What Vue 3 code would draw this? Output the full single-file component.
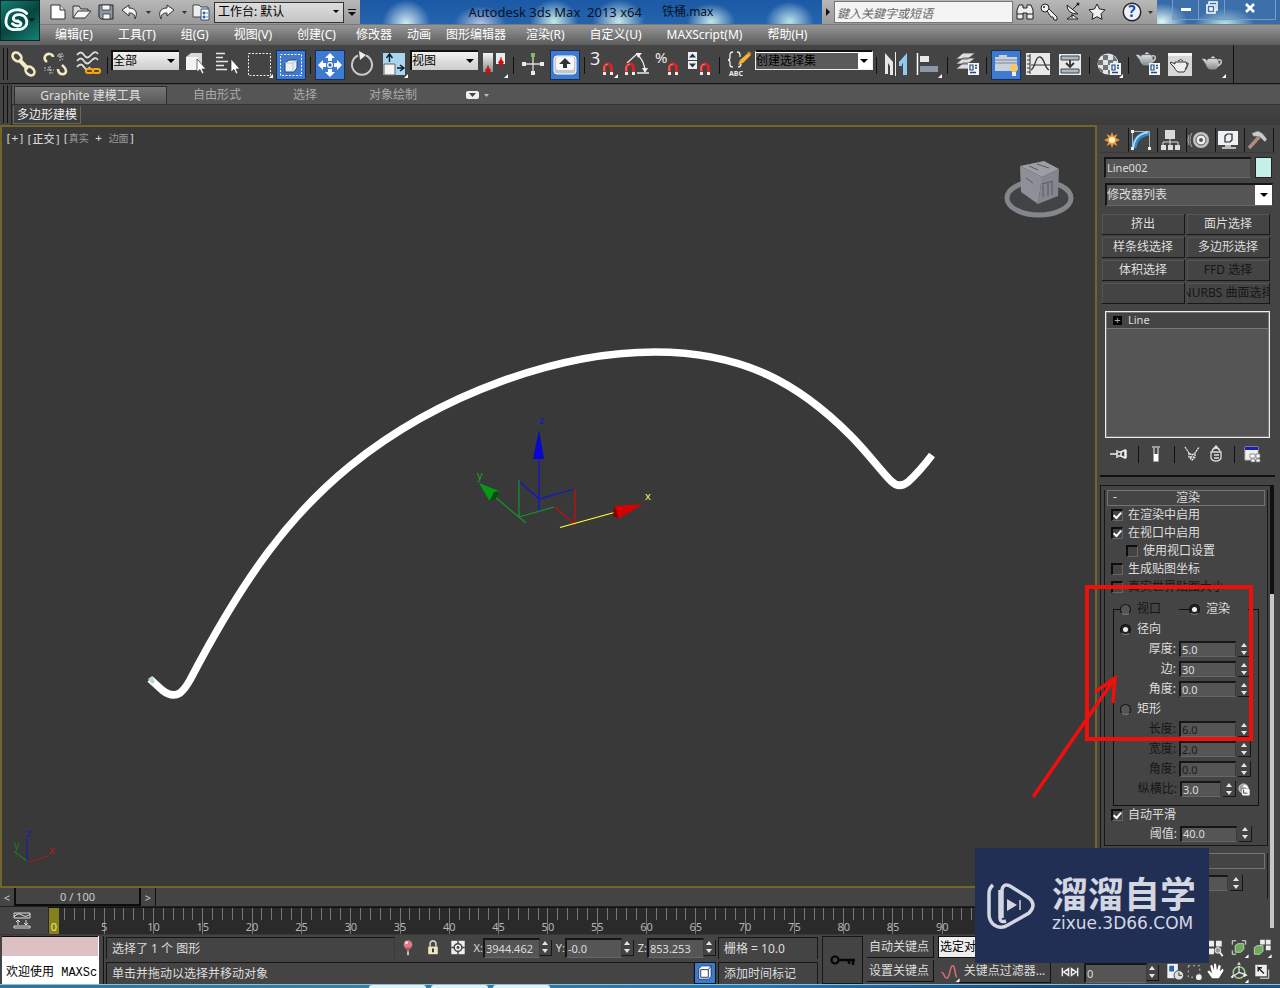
<script setup>
import { ref } from 'vue'

const quick = ['new', 'open', 'save', 'undo', 'caret', 'redo', 'caret', 'project']
const help = ['binoculars', 'keyIcon', 'dish', 'star']
const menus = [
  { t: '编辑(E)' }, { t: '工具(T)' }, { t: '组(G)' }, { t: '视图(V)' }, { t: '创建(C)' },
  { t: '修改器', tight: true }, { t: '动画', tight: true }, { t: '图形编辑器', tight: true },
  { t: '渲染(R)' }, { t: '自定义(U)' }, { t: 'MAXScript(M)' }, { t: '帮助(H)' }
]
const tools = [
  { i: 'link' }, { i: 'unlink' }, { i: 'bind' }, { sep: 1 },
  { select: '全部', label: '选择过滤器' },
  { i: 'pick' }, { i: 'pickList' }, { i: 'region' }, { i: 'crossing', on: 1 }, { sep: 1 },
  { i: 'move', on: 1 }, { i: 'rotate' }, { i: 'scale' },
  { select: '视图', label: '参考坐标系' },
  { i: 'pivot' }, { sep: 1 }, { i: 'manipulate' }, { i: 'keyboard', on: 1 }, { sep: 1 },
  { i: 'snap' }, { i: 'angle' }, { i: 'percent' }, { i: 'spinSnap' }, { sep: 1 }, { i: 'named' },
  { select: '创建选择集', label: '命名选择集', wide: 1 }, { sep: 1 },
  { i: 'mirror' }, { i: 'align' }, { sep: 1 }, { i: 'layers' }, { sep: 1 },
  { i: 'ribbon', on: 1 }, { i: 'curve' }, { i: 'schematic' }, { sep: 1 }, { i: 'material' }, { sep: 1 },
  { i: 'renderSetup' }, { i: 'frameWin' }, { i: 'teapot' }
]
const panelTabs = ['create', 'modify', 'hierarchy', 'motion', 'display', 'hammer']
const navTools = ['timeConf', 'dots', 'zoomAll', 'extents', 'extentsAll', 'timeConf', 'dots', 'hand', 'orbit', 'maximize']
const sets = [
  { t: '挤出' }, { t: '面片选择' }, { t: '样条线选择' }, { t: '多边形选择' },
  { t: '体积选择' }, { t: 'FFD 选择', off: 1 }, { t: '' }, { t: 'NURBS 曲面选择', off: 1 }
]
const checks = ref([
  { t: '在渲染中启用', v: true }, { t: '在视口中启用', v: true }, { t: '使用视口设置', v: false, indent: 1 },
  { t: '生成贴图坐标', v: false }, { t: '真实世界贴图大小', v: false, off: 1 }
])
const radial = [{ t: '厚度:', v: '5.0' }, { t: '边:', v: '30' }, { t: '角度:', v: '0.0' }]
const rect = [{ t: '长度:', v: '6.0' }, { t: '宽度:', v: '2.0' }, { t: '角度:', v: '0.0' }]
const mode = ref('render')
const shape = ref('radial')
const smooth = ref(true)
const coords = [{ t: 'X:', v: '3944.462' }, { t: 'Y:', v: '-0.0' }, { t: 'Z:', v: '853.253' }]
const frames = Array.from({ length: 101 }, (_, n) => n)

const chain = 'fill="none" stroke="#f3e9c4" stroke-width="2.6"'
const magnet = (x, y) => `<path d="M${x + 1.5} ${y + 9}V${y + 4.5}a3.5 3.5 0 0 1 7 0V${y + 9}" fill="none" stroke="#d22626" stroke-width="3"/><path d="M${x + 1} ${y + 8}V${y + 4}q1-3 4-3" fill="none" stroke="#ef8a80"/><path d="M${x} ${y + 9}h3v3h-3zM${x + 7} ${y + 9}h3v3h-3z" fill="#eee"/>`
const corner = '<path d="M28 23v4h-4z" fill="#fff"/>'
const dialog = (x, y) => `<path d="M${x} ${y}h11v12h-11z" fill="#f2f4f7"/><path d="M${x + 2} ${y + 2}h3v5h-3z" fill="none" stroke="#1d4b82" stroke-width="1.2"/><path d="M${x + 7} ${y + 2.5}h2M${x + 7} ${y + 5}h2M${x + 2} ${y + 9.5}h6" stroke="#1d4b82" stroke-width="1.3"/>`
const cursor = (x, y) => `<path d="M${x} ${y}v13l3-2.500 2 4.500 2-1-2-4h4z" fill="#fff" stroke="#333" stroke-width=".7"/>`
const pot = (x, y) => `<path d="M${x + 5} ${y + 4}h9c3 4 2 8-1.500 10h-6c-2.500-1.500-3-3-3.500-5L${x} ${y + 5}l-1-1h3l2 2zM${x + 8} ${y + 3}c1-2 3-2 4 0z" fill="url(#silver)" stroke="#a5aaad" stroke-width=".6"/><path d="M${x + 15} ${y + 5}c5-1 4 4-.5 6" fill="none" stroke="#c8cccf" stroke-width="1.500"/>`

const icons = {
  link: `<g ${chain}><ellipse cx="7" cy="6" rx="5" ry="3.800" transform="rotate(42 7 6)"/><ellipse cx="20" cy="20" rx="5" ry="3.800" transform="rotate(42 20 20)"/><path d="M9 8.500l9 9.500" stroke-width="4"/></g>`,
  unlink: `<g ${chain}><path d="M5 11c-5-4-1-9 3-8 2 0 3 2 3 3M16 18c0 6 8 7 8 2 0-3-2-4-4-6"/></g><g stroke="#c4c4c4" fill="none"><path d="M15 5h7M18 2v8M16 3l5 6M5 19h7M8 15v8M6 16l5 7M20 2v4M3 16v4" stroke-dasharray="2 1"/></g>`,
  bind: `<g fill="none" stroke="#d8dcdd" stroke-width="1.800"><path d="M3 4q4-5 7 0t7 0 7-1M3 10q4-5 7 0t7 0 7-1M3 16q4-5 7 0t6 0"/></g><g fill="#5f4300" stroke="#f3a81b" stroke-width="2"><rect x="12" y="18" width="7" height="4" rx="2"/><rect x="19" y="18" width="7" height="4" rx="2"/></g>`,
  pick: `<path d="M5 6l5-4h11l-4 4zM17 6l4-4v12l-4 5z" fill="#d6d8da"/><path d="M5 6h12v13H5z" fill="#f4f4f4"/>${cursor(16, 8)}`,
  pickList: `<path d="M3 2.500h9M3 6.500h7M3 10.500h12M3 14.500h8M3 18.500h11" stroke="#e6e6e6" stroke-width="1.300"/>${cursor(18, 8)}`,
  region: `<path d="M3.500 2.500h22v22h-22z" fill="none" stroke="#eee" stroke-dasharray="2 1.500"/>${corner}`,
  crossing: `<path d="M3.500 3.500h21v21h-21z" fill="none" stroke="#fff" stroke-dasharray="2 1.500"/><path d="M8 12l4-3h8v8l-3 4H8z" fill="#eceff2" stroke="#294a78"/><path d="M8 12h8l4-3M16 12v8" fill="none" stroke="#bbc4ce"/>`,
  move: `<g fill="#fff"><path d="M14 2l5 5h-3v3h-4V7H9zM14 26l5-5h-3v-3h-4v3H9zM2 14l5-5v3h3v4H7v3zM26 14l-5-5v3h-3v4h3v3z" /></g><circle cx="14" cy="14" r="2.300" fill="#2f5f9c" stroke="#fff" stroke-width="1.300"/>`,
  rotate: `<path d="M10 4.500A10 10 0 1 0 18 4.500" fill="none" stroke="#c7cbce" stroke-width="2"/><path d="M11 0l7 4-6 5z" fill="#f0f0f0"/>`,
  scale: `<path d="M3 2h22v22H3z" fill="#a9d5ee"/><path d="M4 13h11v11H4z" fill="#f4f4f4" stroke="#666"/><path d="M9.500 11V4m-3 3l3-4 3 4M17 17h6m-3-3l4 3-4 3" stroke="#0d1a29" fill="none" stroke-width="1.400"/>${corner}`,
  pivot: `<path d="M3 2h10v19H3z" fill="url(#silver)"/><path d="M16 2h9v11h-9z" fill="#e9ebed"/><path d="M8 15.500l3 4-3 4-3-4zM21 7.500l3 4-3 4-3-4z" fill="#cc1010"/><path d="M8 14v9M21 6v9" stroke="#cc1010"/>${corner}`,
  manipulate: `<path d="M14 5v18M5 13h18" stroke="#ddd" stroke-width="1.300"/><path d="M12 2h4v4h-4z" fill="#72c653"/><path d="M12 20h4v4h-4zM3 11h4v4H3zM21 11h4v4h-4z" fill="#e9e9e9"/>`,
  keyboard: `<rect x="3" y="5" width="22" height="18" rx="3" fill="#bfc8d1" stroke="#fff"/><rect x="5" y="6" width="18" height="13" rx="2" fill="#f7f7f7"/><path d="M14 7l6 6h-4v4h-4v-4H8z" fill="#333"/>`,
  snap: `<text x="0" y="14" font-size="18" fill="#eee" font-family="Noto Sans">3</text>${magnet(13, 12)}${corner}`,
  angle: `<path d="M5 12L16 2M15 22h12M16 4q7 7 7 17" fill="none" stroke="#e9e9e9" stroke-width="1.300"/><path d="M14 2h6l-4 5zM20 17h6l-3 5z" fill="#eee"/>${magnet(3, 12)}`,
  percent: `<text x="1" y="12" font-size="15" fill="#eee" font-family="Noto Sans">%</text>${magnet(14, 12)}`,
  spinSnap: `<path d="M2 1h9v8H2zM2 10h9v8H2z" fill="#eef0f3"/><path d="M6.500 2.500l3.500 4H3zM6.500 16.500l3.500-4H3z" fill="#273446"/>${magnet(14, 12)}`,
  named: `<g fill="none" stroke="#eee" stroke-width="1.300"><path d="M8 1q-3 0-3 3v2q0 3-2 3 2 0 2 3v2q0 2 3 2M12 1q3 0 3 3v2M16 13q0 3-3 3"/></g><path d="M13 14l2-5 8-7 3 2-8 8z" fill="#f2b335"/><path d="M23 1l3 2" stroke="#db7a50" stroke-width="2"/><text x="4" y="25" font-size="7" font-weight="700" fill="#eee" font-family="Noto Sans">ABC</text>`,
  mirror: `<path d="M3 2l8 9v13H8v-9l-2-3v11H3z" fill="#e6e8ea"/><path d="M25 2l-8 9v4h3v-2l1-1v12h4z" fill="#91caf0"/><path d="M13.500 1v24" stroke="#eee"/>`,
  align: `<path d="M3.500 2v22" stroke="#fff" stroke-width="1.500"/><path d="M6 5h9v6H6z" fill="#e9e9e9"/><path d="M6 15h18v6H6z" fill="#8c97a8"/>${corner}`,
  layers: `<g fill="#dedede" stroke="#4a4a4a" stroke-width=".8"><path d="M3 18l7-6h12l-7 6zM3 13l7-6h12l-7 6zM3 8l7-6h12l-7 6z"/></g>${dialog(15, 12)}`,
  ribbon: `<path d="M3 6h4V4h8v2h10v14H3z" fill="#c9d2dc"/><path d="M3 9h22M3 12h22" stroke="#778698"/><circle cx="22" cy="17" r="4" fill="#f7c867"/><path d="M20 21h4v4h-4z" fill="#eee"/>`,
  curve: `<path d="M2 2h24v22H2z" fill="#e9e9e9"/><path d="M6 3v20M3 5h3M3 9h3M3 13h3M3 17h3M3 21h3M7 14h19" stroke="#333"/><path d="M7 19C12 16 11 5 16 6s4 11 9 13" fill="none" stroke="#333" stroke-width="1.300"/>`,
  schematic: `<path d="M3 3h22v21H3z" fill="#e9e9e9"/><path d="M5 5h18v4H5zM5 18h18v4H5z" fill="#aeb8c1" stroke="#3c4650"/><path d="M14 9v7m-4-4l4 4 4-4" fill="none" stroke="#333" stroke-width="1.800"/>`,
  material: `<circle cx="13" cy="13" r="10.500" fill="#e3e6e8"/><path d="M8 4h5v5H8zM19 5l3 4v1h-4V4zM3 9h5v5H3zM13 9h5v5h-5zM8 14h5v5H8zM18 14h5l-1 5h-4zM13 19h5v3l-5 1zM3.500 16l4.500 3v3q-4-2-4.500-6z" fill="#707678"/>${dialog(15, 12)}${corner}`,
  renderSetup: `${pot(3, 0)}${dialog(15, 12)}`,
  frameWin: `<path d="M2 2h24v23H2z" fill="#d7d7d7"/><path d="M2 2h24v3H2z" fill="#f5f5f5"/><path d="M9 11h11q3 4-2 10h-6q-3-2-4-5l-4-4 1-1 4 2zM12 10q3-3 5 0M20 12q5-1-1 6" fill="#eee" stroke="#333"/>`,
  teapot: `${pot(5, 4)}${corner}`,
  new: '<path d="M7 7h9l5 5v9H7z" fill="#fff" stroke="#333"/><path d="M16 7v5h5" fill="#ddd" stroke="#333"/>',
  open: '<path d="M5 20V8h6l2 3h7v3" fill="#d8d8d8" stroke="#333"/><path d="M5 20l5-7h13l-6 7z" fill="#f7f7f7" stroke="#333"/>',
  save: '<path d="M7 7h14v14H9l-2-2z" fill="#8a98aa" stroke="#222"/><path d="M10 7h8v5h-8zM11 16h7v5h-7z" fill="#f5f5f5" stroke="#333" stroke-width=".8"/>',
  undo: '<path d="M6 12l7-5v3c7 0 9 5 6 11 0-5-2-6-6-6v3z" fill="#f4f4f4" stroke="#333"/>',
  redo: '<path d="M22 12l-7-5v3c-7 0-9 5-6 11 0-5 2-6 6-6v3z" fill="#f4f4f4" stroke="#333"/>',
  caret: '<path d="M12 13h5l-2.500 3z" fill="#333"/>',
  project: '<path d="M5 7h6l2 2h7v10H5z" fill="#eee" stroke="#444"/><path d="M13 11h8v11h-8z" fill="#fff" stroke="#334a70"/><path d="M15 14h2v2h-2zM15 18h2v2h-2zM18 15h2M18 19h2" fill="#2869b3" stroke="#2869b3" stroke-width=".8"/>',
  binoculars: '<path d="M8 7h4v3h4V7h4l2 5v9h-6v-6h-4v6H6v-9zM6 16h6M16 16h6" fill="#eee" stroke="#222"/>',
  keyIcon: '<circle cx="10" cy="10" r="4" fill="#eee" stroke="#222"/><path d="M12 13l2-2 8 8v3h-3l-1-3h-2z" fill="#eee" stroke="#222"/><circle cx="9" cy="9" r="1" fill="#222"/>',
  dish: '<path d="M8 7q0 9 11 9zM14 11l5-5M13 16v4M8 21h11l-5-4z" fill="#eee" stroke="#222"/><circle cx="19" cy="6" r="1.500" fill="#222"/>',
  star: '<path d="M14 6l2.500 5 5.500.8-4 4 1 5.500-5-2.600-5 2.600 1-5.500-4-4 5.500-.8z" fill="#f0f0f0" stroke="#222"/>',
  question: '<circle cx="14" cy="14" r="8" fill="#eef3fb" stroke="#222" stroke-width="1.300"/><text x="10.500" y="19" font-size="14" font-weight="700" fill="#194fa8" font-family="Noto Sans">?</text>',
  create: '<path d="M14 6l1.500 4 4-2-2 4 4.500 2-4.500 2 2 4-4-2-1.500 4-1.500-4-4 2 2-4-4.500-2 4.500-2-2-4 4 2z" fill="#f39a38"/><circle cx="14" cy="14" r="3" fill="#fff3bd"/>',
  modify: '<path d="M7 22Q8 9 22 7" fill="none" stroke="#2c8bd2" stroke-width="5"/><path d="M6.500 21Q8 8 21 6.500" fill="none" stroke="#b8e0f8" stroke-width="1.600"/><path d="M5.500 22V5.500H22.500V22.500" fill="none" stroke="#ccc" stroke-width=".8"/><path d="M4 4h3v3H4zM21 21h3v3h-3zM4 21h3v3H4z" fill="#eee"/>',
  hierarchy: '<path d="M9 4h10v9H9z" fill="#d7dadd"/><path d="M14 12v7M7 19v-3h15v3" stroke="#ddd" fill="none"/><path d="M5 19h5v5H5zM12 19h5v5h-5zM19 19h5v5h-5z" fill="#ddd"/>',
  motion: '<circle cx="16" cy="14" r="8" fill="#bfc3c6"/><circle cx="16" cy="14" r="5" fill="#eee" stroke="#555"/><circle cx="16" cy="14" r="2" fill="#555"/><path d="M7 7q-4 7 0 14M4 9q-2 5 0 10" fill="none" stroke="#aaa"/>',
  display: '<path d="M4 5h20v14H4z" fill="#eef2f4"/><path d="M11 19h6v2h5v2H8v-2h3z" fill="#b9bdc0"/><path d="M11 10l2-2h5v6l-2 2h-5z" fill="none" stroke="#222" stroke-width="1.200"/>',
  hammer: '<path d="M17 10L6 22" stroke="#b08b84" stroke-width="3.500"/><path d="M9 7l6-2 4 2 5 6-2 3-5-5-7-1z" fill="#c9cccf" stroke="#666" stroke-width=".6"/>',
  pin: '<path d="M4 14h7M11 10v8M12 12h3v4h-3M15 12l4-2v8l-4-2M20 10v8" stroke="#eee" fill="none" stroke-width="1.500"/>',
  tube: '<path d="M10 7h8M12 8v13h4V8" stroke="#bbb" fill="none" stroke-width="1.500"/><path d="M12 14h4v7h-4z" fill="#fff"/>',
  unique: '<path d="M7 7l4 6 3 2 3-2 4-6M11 13v4l3 3 3-3v-4M12 17h4" stroke="#eee" fill="none" stroke-width="1.300" stroke-dasharray="2 .7"/>',
  trash: '<path d="M9 12h10v6q-1 3-5 3t-5-3zM10 11q1-3 4-3t4 3M12 8l2-2 2 2M12 15h5M12 18h5" stroke="#ddd" fill="none" stroke-width="1.300"/>',
  configure: '<path d="M7 7h13v13H7z" fill="#f0f0f0" stroke="#bbb"/><path d="M7 7h13v3H7z" fill="#1721b9"/><path d="M12 14h5v4h-5zM18 14h4v4h-4zM13 19h4v3h-4zM18 19h4v3h-4z" fill="#fff" stroke="#777" stroke-width=".8"/>',
  lightPin: '<circle cx="14" cy="11" r="4.500" fill="#db7c88"/><circle cx="12.500" cy="9" r="1.500" fill="#ffe0e4"/><path d="M11 14h6l-2 4h-2z" fill="#bb5460"/><path d="M14 18v4" stroke="#eee" stroke-width="1.500"/>',
  lock: '<path d="M11 13v-4q3-4 6 0v4" stroke="#ddd" fill="none" stroke-width="1.500"/><path d="M9 13h10v8H9z" fill="#f0e5bd"/><path d="M14 15v4" stroke="#333" stroke-width="2"/>',
  ratioLock: '<circle cx="13" cy="13" r="5" fill="#999" stroke="#ddd"/><path d="M12 11q2-3 5 0v2M12 14h7v6h-7z" fill="#f2f2f2" stroke="#fff"/><path d="M13 14v4h4" fill="none" stroke="#444"/>',
  absolute: '<path d="M7 7h14v14H7z" fill="#eee"/><path d="M7 14h14M14 7v14" stroke="#444" stroke-width="1.500"/><circle cx="14" cy="14" r="4" fill="#eee" stroke="#444" stroke-width="1.500"/><circle cx="14" cy="14" r="1.500" fill="#444"/>',
  cube: '<path d="M8 10l3-3h10v11l-3 3H8z" fill="#fff" stroke="#1b376f"/><path d="M10 11h8v8h-8zM18 11l3-4" fill="none" stroke="#1b376f"/>',
  redCurve: '<path d="M5 15c3-1 3 7 6 6s3-14 6-13 1 7 4 12" stroke="#d66c78" fill="none" stroke-width="1.600"/><path d="M24 21v4h-4z" fill="#fff"/>',
  keyMode: '<path d="M6 9v9M22 9v9M12.500 10l-5 3.500 5 3.500zM15.500 10l5 3.500-5 3.500z" stroke="#eee" fill="none" stroke-width="1.500"/>',
  timeConf: '<path d="M6 6h11v15H6z" fill="#eef2f8"/><path d="M8 8h5v6H8z" fill="#2864a8"/><circle cx="18" cy="18" r="5" fill="#ddd" stroke="#444"/><path d="M18 15v3h3" stroke="#333" fill="none"/>',
  dots: '<path d="M7 8h12M7 8v12h6M19 11v6" stroke="#ccc" fill="none" stroke-dasharray="2 3"/><circle cx="18" cy="20" r="3" fill="#eee"/>',
  hand: '<path d="M11 21l-5-7 2-1 3 3-2-8 2-1 2 6V6h2l1 7 2-6 2 1-1 6 3-3 1 2-5 8z" fill="#fff"/>',
  orbit: '<circle cx="14" cy="15" r="6" fill="none" stroke="#9fd089" stroke-width="1.600"/><path d="M14 8v7l-6 4M14 15l6 2" fill="none" stroke="#eee" stroke-width="1.300"/><path d="M12 7l2-3 2 3zM8 17v4l-3-1zM19 15l4 3-4 2z" fill="#eee"/><path d="M24 22v4h-4z" fill="#fff"/>',
  maximize: '<path d="M7 7h12v12H7z" fill="#eee"/><path d="M16 16l-6-6v4M10 10h4" stroke="#222" fill="none" stroke-width="1.500"/><path d="M21 12v9h-9" stroke="#eee" fill="none"/>',
  zoomAll: '<path d="M7 7h6v6H7zM15 7h6v6h-6zM7 15h6v6H7z" fill="#eee"/><circle cx="17" cy="17" r="3" fill="#999" stroke="#eee"/><path d="M19 19l3 4" stroke="#eee" stroke-width="2"/>',
  extents: '<path d="M7 11V7h4M17 7h4v4M7 17v4h4" stroke="#eee" fill="none"/><path d="M10 12l3-2h6v6l-3 3h-6z" fill="#6fa85e" stroke="#b7d5ab"/><path d="M24 21v4h-4z" fill="#fff"/>',
  extentsAll: '<path d="M12 6h5v5h-5zM18 6h5v5h-5zM18 12h5v5h-5z" fill="#eee"/><path d="M6 14l3-2h6v6l-3 3H6z" fill="#6fa85e" stroke="#b7d5ab"/><path d="M24 21v4h-4z" fill="#fff"/>'
}
</script>

<template>
  <div class="app">
    <svg class="defs" width="0" height="0"><defs><linearGradient id="silver" x2="0" y2="1"><stop stop-color="#f5f5f5"/><stop offset="1" stop-color="#858c91"/></linearGradient></defs></svg>
    <header class="head">
      <button class="logo" aria-label="应用程序">
        <svg viewBox="0 0 40 41"><path d="M27 13C21 7 8 8 6 17c-3 10 3 14 11 13 9 0 12-6 9-12-3-5-12-5-13 0 0 5 8 2 8 6 0 3-6 3-9 0M17 21h1" fill="none" stroke="#f3fffc" stroke-width="3" stroke-linecap="round"/><path d="M29 18h7l-3.500 4z" fill="#001c18"/></svg>
      </button>
      <div class="head-rows">
        <div class="title">
          <div class="quick">
            <button v-for="(q, n) in quick" :key="n" :class="['q', { narrow: q === 'caret' }]" :aria-label="q"><svg viewBox="2 2 24 24" v-html="icons[q]" /></button>
            <span class="sel workspace"><select aria-label="工作台"><option>工作台: 默认</option></select></span>
            <button class="more" aria-label="更多"><i /></button>
          </div>
          <h1 class="caption"><span class="product">Autodesk 3ds Max&nbsp; 2013 x64</span><span>铁桶.max</span></h1>
          <div class="search">
            <button class="fold" aria-label="折叠"><i /></button>
            <input type="text" aria-label="搜索" placeholder="鍵入关鍵字或短语">
            <button v-for="h in help" :key="h" class="q" :aria-label="h"><svg viewBox="2 2 24 24" v-html="icons[h]" /></button>
            <button class="q question" aria-label="帮助"><svg viewBox="3 3 22 22" v-html="icons.question" /></button>
            <button class="q narrow" aria-label="更多帮助"><svg viewBox="2 2 24 24" v-html="icons.caret" /></button>
          </div>
          <div class="win">
            <button aria-label="最小化"><svg viewBox="0 0 14 14"><path d="M2 7h10v3H2z" fill="#fff"/></svg></button>
            <button aria-label="还原"><svg viewBox="0 0 14 14"><path d="M4 3V1h8v8h-2M2 4h8v8H2zM5 7h2v2H5z" fill="none" stroke="#fff" stroke-width="1.500"/></svg></button>
            <button class="close" aria-label="关闭"><svg viewBox="0 0 14 14"><path d="M3 3l8 8M11 3l-8 8" stroke="#fff" stroke-width="2.600"/></svg></button>
          </div>
        </div>
        <nav class="menu"><button v-for="m in menus" :key="m.t" :class="{ tight: m.tight }">{{ m.t }}</button></nav>
      </div>
    </header>

    <div class="toolbar-row">
      <div class="toolbar">
        <span class="grip" />
        <template v-for="(t, n) in tools" :key="n">
          <span v-if="t.sep" class="sep" />
          <span v-else-if="t.select" :class="['sel', 'tool-sel', { wide: t.wide }]"><select :aria-label="t.label"><option>{{ t.select }}</option></select></span>
          <button v-else :class="['tool', { on: t.on }]" :aria-label="t.i"><svg viewBox="0 0 28 28" v-html="icons[t.i]" /></button>
        </template>
      </div>
    </div>

    <div class="ribbon">
      <span class="grip" />
      <div class="ribbon-body">
        <div class="tabs">
          <button class="tab active">Graphite 建模工具</button><button class="tab">自由形式</button><button class="tab">选择</button><button class="tab">对象绘制</button>
          <button class="tab mini" aria-label="最小化功能区"><svg viewBox="0 0 26 10"><rect x="1" y="1" width="13" height="8" rx="2" fill="#eee"/><path d="M4 3h7l-3.500 4z" fill="#444"/><path d="M19 4h5l-2.500 3z" fill="#bbb"/></svg></button>
        </div>
        <div class="polys"><button>多边形建模</button></div>
      </div>
    </div>

    <main class="work">
      <section class="left">
        <div class="viewport">
          <div class="vlabel"><span>[+]</span><span>[<b>正交</b>]</span><span>[<em>真实</em> + <em>边面</em>]</span></div>
          <svg class="scene" viewBox="0 125 1097 763" preserveAspectRatio="xMidYMid slice">
            <path d="M150 679l12 11Q172 698 180 693 185 689 190 680C245 575 290 515 350 466 440 393 560 352 655 352 745 352 800 385 850 435 868 453 880 470 891 481Q899 489 908 482 920 471 932 455" fill="none" stroke="#fff" stroke-width="7.500"/>
            <path d="M148 679l4-3 3 6-3 2z" fill="#b8d9d2"/>
            <g fill="none" stroke-width="1.200">
              <path d="M539 458v54M519 481l20 18 35-10" stroke="#1212d8"/>
              <path d="M519 480v37M495 497l31 26M519 517l35-10" stroke="#14942d"/>
              <path d="M575 489v35M555 507l20 18" stroke="#c80e0e"/><path d="M560 527.500l56-15.500" stroke="#ffff38"/>
            </g>
            <path d="M539 430l-6 29h11z" fill="#0707ce"/><path d="M479 483l10 17q8 1 10-9z" fill="#069914"/><path d="M490 500q7 1 9-9l-5 1z" fill="#034c12"/><path d="M643 504l-28 2-1 11 6 1z" fill="#d60000"/><path d="M614 507q4 4 4 11l-5-2z" fill="#810000"/>
            <g font-family="Noto Sans" font-size="11"><text x="539" y="424" fill="#1515ce">z</text><text x="477" y="479" fill="#299b2d">y</text><text x="645" y="500" fill="#eeee62">x</text>
              <text x="26" y="837" fill="#1c1cb5">z</text><text x="14" y="849" fill="#157f26">y</text><text x="49" y="854" fill="#b41b26">x</text></g>
            <g fill="none" stroke-width="1.200"><path d="M27 839v23" stroke="#1a1aaa"/><path d="M15 852l12 9" stroke="#177c27"/><path d="M28 862l21-6" stroke="#aa1822"/></g>
            <ellipse cx="1039" cy="198" rx="32" ry="17" fill="#414345" stroke="#83868b" stroke-width="5"/><path d="M1020 166l24-5 15 8-17 8z" fill="#9b9fa5"/><path d="M1020 166l22 11-4 27-17-12z" fill="#8d9197"/><path d="M1042 177l17-8-1 27-20 8z" fill="#83878d"/><path d="M1043 185v12M1048 183v13M1052 182v13M1042 184l11-3M1029 166l9 4M1037 164l12 4M1026 178l7 5" stroke="#575b60" fill="none"/>
          </svg>
        </div>
        <div class="slider"><button aria-label="上一帧">&lt;</button><button class="thumb">0 / 100</button><button aria-label="下一帧">&gt;</button></div>
        <div class="timeline">
          <button class="mini-curve" aria-label="迷你曲线编辑器"><svg viewBox="0 0 20 18"><path d="M2 1h16v5H2zM2 14h16v2H2zM2 5q4-5 8-2t8-1M6 13V8M4 10l2-2 2 2M14 8v5M12 11l2 2 2-2" fill="none" stroke="#ddd"/></svg></button>
          <div class="ruler"><div v-for="f in frames" :key="f" :class="['frame', { five: f % 5 === 0, now: f === 0 }]"><span v-if="f % 5 === 0">{{ f }}</span></div></div>
        </div>
      </section>

      <aside class="panel">
        <div class="ptabs"><button v-for="p in panelTabs" :key="p" :aria-label="p"><svg viewBox="2 2 24 24" v-html="icons[p]" /></button></div>
        <div class="name"><input type="text" value="Line002" aria-label="名称"><button class="swatch" aria-label="颜色" /></div>
        <span class="sel modlist"><select aria-label="修改器列表"><option>修改器列表</option></select></span>
        <div class="sets"><button v-for="(s, n) in sets" :key="n" :disabled="!!s.off" :aria-label="s.t || '空'">{{ s.t }}</button></div>
        <div class="stack"><div class="item"><button aria-label="展开">+</button>Line</div></div>
        <div class="stack-tools">
          <button aria-label="锁定堆栈"><svg viewBox="2 2 24 24" v-html="icons.pin" /></button><span class="sep" />
          <button aria-label="显示最终结果"><svg viewBox="2 2 24 24" v-html="icons.tube" /></button><span class="sep" />
          <button aria-label="使唯一"><svg viewBox="2 2 24 24" v-html="icons.unique" /></button>
          <button aria-label="移除"><svg viewBox="2 2 24 24" v-html="icons.trash" /></button><span class="sep" />
          <button aria-label="配置"><svg viewBox="2 2 24 24" v-html="icons.configure" /></button>
        </div>
        <div class="rollouts">
          <div class="roll-col">
            <section class="roll">
              <button class="roll-head"><span>-</span><span>渲染</span></button>
              <div class="roll-body">
                <label v-for="c in checks" :key="c.t" :class="['check', { indent: c.indent, off: c.off }]"><input v-model="c.v" type="checkbox" :disabled="!!c.off">{{ c.t }}</label>
                <fieldset>
                  <legend><label class="off"><input v-model="mode" type="radio" value="view" name="mode">视口</label><i class="dash" /><label><input v-model="mode" type="radio" value="render" name="mode">渲染</label></legend>
                  <label class="radio"><input v-model="shape" type="radio" value="radial" name="shape">径向</label>
                  <div v-for="(r, n) in radial" :key="'a' + n" class="param"><label :for="'ra' + n">{{ r.t }}</label><input :id="'ra' + n" type="text" :value="r.v"><span class="spin"><button aria-label="增加" /><button aria-label="减少" /></span></div>
                  <label class="radio"><input v-model="shape" type="radio" value="rect" name="shape">矩形</label>
                  <div v-for="(r, n) in rect" :key="'b' + n" class="param off"><label :for="'re' + n">{{ r.t }}</label><input :id="'re' + n" type="text" :value="r.v" disabled><span class="spin"><button aria-label="增加" /><button aria-label="减少" /></span></div>
                  <div class="param ratio"><label for="ratio" class="off">纵横比:</label><input id="ratio" type="text" value="3.0"><span class="spin"><button aria-label="增加" /><button aria-label="减少" /></span><button class="plock" aria-label="锁定"><svg viewBox="7 6 14 16" v-html="icons.ratioLock" /></button></div>
                </fieldset>
                <label class="check"><input v-model="smooth" type="checkbox">自动平滑</label>
                <div class="param last"><label for="thr">阈值:</label><input id="thr" type="text" value="40.0"><span class="spin"><button aria-label="增加" /><button aria-label="减少" /></span></div>
              </div>
            </section>
            <section class="roll next">
              <button class="roll-head" aria-label="插值" />
              <div class="roll-body"><div class="param steps"><input type="text" aria-label="步数"><span class="spin"><button aria-label="增加" /><button aria-label="减少" /></span></div></div>
            </section>
          </div>
          <div class="bar" />
        </div>
      </aside>
    </main>

    <footer class="status">
      <div class="script"><div class="pink" /><input type="text" value="欢迎使用 MAXScript" aria-label="MAXScript 侦听器"></div>
      <div class="info">
        <div class="line">
          <p class="well grow">选择了 1 个 图形</p>
          <button v-for="i in ['lightPin', 'lock', 'absolute']" :key="i" class="sb" :aria-label="i"><svg viewBox="2 2 24 24" v-html="icons[i]" /></button>
          <div v-for="c in coords" :key="c.t" class="coord"><label :for="'c' + c.t[0]">{{ c.t }}</label><input :id="'c' + c.t[0]" type="text" :value="c.v"><span class="spin"><button aria-label="增加" /><button aria-label="减少" /></span></div>
          <p class="well grid">栅格 = 10.0</p>
        </div>
        <div class="line">
          <p class="well grow">单击并拖动以选择并移动对象</p>
          <button class="cube" aria-label="自适应降级"><svg viewBox="4 4 21 21" v-html="icons.cube" /></button>
          <p class="well grid">添加时间标记</p>
        </div>
      </div>
      <button class="bigkey" aria-label="设置关键点"><svg viewBox="0 0 26 14"><circle cx="5" cy="7" r="3.500" fill="none" stroke="#060606" stroke-width="2.200"/><path d="M8 7h17M19 7v4M23 7v5" stroke="#060606" stroke-width="2.500" fill="none"/></svg></button>
      <div class="keys"><button>自动关键点</button><button>设置关键点</button></div>
      <div class="filters">
        <select aria-label="选定对象"><option>选定对象</option></select>
        <div class="line"><button class="sb" aria-label="切线"><svg viewBox="2 2 24 24" v-html="icons.redCurve" /></button><button class="fbtn">关键点过滤器...</button></div>
      </div>
      <div class="time">
        <div class="line" />
        <div class="line"><button class="sb" aria-label="关键点模式"><svg viewBox="2 2 24 24" v-html="icons.keyMode" /></button><input type="text" value="0" aria-label="当前帧"><span class="spin"><button aria-label="增加" /><button aria-label="减少" /></span></div>
      </div>
      <div class="nav">
        <button v-for="(i, n) in navTools" :key="n" class="sb" :aria-label="i"><svg viewBox="2 2 24 24" v-html="icons[i]" /></button>
      </div>
    </footer>
    <div class="taskbar"><i /><i /><i /></div>

    <svg class="mark" viewBox="0 0 224 216"><path d="M57 2h164v152H57z" fill="none" stroke="#f00f0b" stroke-width="4"/><path d="M3 212L83 96M65 107l20-14-2 25" fill="none" stroke="#f00f0b" stroke-width="3.500"/></svg>
    <div class="brand">
      <svg viewBox="0 0 48 50"><path d="M12 10v28q0 5 6 3M14 38V10q1-7 8-4l19 12q8 7 0 15L20 45q-8 5-15-1-4-4-4-10V14q0-6 4-9" fill="none" stroke="#d3d7e2" stroke-width="3.500"/><path d="M19 19l10 6-10 6z" fill="#d3d7e2"/><path d="M32 20v10" stroke="#d3d7e2" stroke-width="1.500"/></svg>
      <div><strong>溜溜自学</strong><span>zixue.3D66.COM</span></div>
    </div>
  </div>
</template>

<style>
html, body { margin: 0; background: #444; }
</style>
<style scoped>
.app { position: relative; display: flex; flex-direction: column; min-height: 100vh; overflow: hidden; background: #444; color: #dedede; font: 12px/16px "Noto Sans", "Noto Sans CJK SC", sans-serif; }
* { box-sizing: border-box; }
button, input, select { font: inherit; color: inherit; margin: 0; padding: 0; border: 0; background: none; border-radius: 0; min-width: 0; }
input { font-size: 11px; }
p, h1 { margin: 0; }
svg { display: block; overflow: visible; }
.defs { position: absolute; }
.head { display: flex; height: 45px; background: #666; }
.logo { width: 40px; height: 41px; background: linear-gradient(145deg, #147d74, #06463f 50%, #178176); border: 1px solid #0a2a27; }
.logo svg { width: 38px; height: 39px; }
.head-rows { flex: 1; min-width: 0; }
.title { display: flex; height: 24px; background: #aaa; }
.quick, .search { display: flex; align-items: center; background: linear-gradient(#b8b8b8, #999); }
.quick { width: 320px; padding-left: 6px; }
.q { width: 24px; height: 24px; flex: none; }
.q svg { width: 24px; height: 24px; }
.narrow { width: 12px; overflow: hidden; }
.narrow svg { margin-left: -6px; }
.question { margin-left: 11px; }
.sel { position: relative; display: block; flex: none; }
.sel select { appearance: none; width: 100%; height: 100%; display: block; line-height: 16px; }
.sel::after { content: ""; position: absolute; right: 4px; top: 50%; margin-top: -2px; border: 4px solid transparent; border-top-color: #000; border-bottom: 0; pointer-events: none; }
.workspace { width: 130px; height: 21px; padding-left: 3px; border: 1px solid #333; background: linear-gradient(#ddd, #c5c5c5); color: #000; }
.workspace::after { border-width: 3px; border-bottom: 0; }
.more { width: 15px; display: grid; justify-content: center; }
.more i { border: 4px solid transparent; border-top-color: #111; border-bottom: 0; }
.more::before { content: ""; height: 1px; background: #111; margin-bottom: 2px; }
.caption { flex: 1; display: flex; justify-content: center; gap: 20px; color: #061322; font-size: 12px; font-weight: 400; line-height: 24px; white-space: pre; background: radial-gradient(ellipse 24px 24px at 10% 100%, #d9edf5, transparent), radial-gradient(ellipse 26px 18px at 26% 100%, #b6c2e5, transparent), radial-gradient(ellipse 24px 22px at 42% 90%, #c7ebe7, transparent), radial-gradient(ellipse 26px 22px at 56% 90%, #c8e6e9, transparent), radial-gradient(ellipse 24px 18px at 76% 90%, #c8e6e9, transparent), radial-gradient(ellipse 24px 20px at 93% 90%, #bde2e8, transparent), linear-gradient(#1c59a6, #2464ad); }
.product { font-size: 13px; }
.search { width: 335px; }
.search input { width: 179px; height: 22px; padding: 2px 2px 0; border: 1px solid #777; background: #f4f4f4; color: #555; font-style: italic; font-size: 12px; }
.search input::placeholder { color: #666; opacity: 1; }
.fold { width: 12px; height: 20px; display: flex; align-items: center; justify-content: center; }
.fold i { border: 4px solid transparent; border-left: 4px solid #111; border-right: 0; }
.win { width: 123px; display: flex; padding: 0 4px 4px 16px; background: radial-gradient(ellipse 26px 18px at 4% 90%, #def8f5, transparent), radial-gradient(ellipse 30px 16px at 55% 100%, #bce1e6, transparent), #386ca8; }
.win button { flex: 1; display: grid; place-items: center; align-content: start; padding-top: 1px; border: 1px solid #789cc4; border-top: 0; margin-left: -1px; background: #4a7ab04d; }
.win .close { flex: 2; }
.win svg { width: 14px; height: 14px; }
.menu { display: flex; gap: 1px; height: 21px; padding-left: 3px; background: linear-gradient(#969696, #5c5c5c); color: #fff; border-top: 1px solid #777; }
.menu button { padding: 0 12px; white-space: nowrap; }
.menu .tight { padding: 0 7px; }
.toolbar-row { height: 39px; background: #444; display: flex; border-bottom: 1px solid #151515; }
.toolbar { display: flex; padding: 3px 5px 0 0; border-right: 1px solid #111; }
.grip { width: 5px; margin: 0 0 2px 3px; border-left: 1px solid #111; border-right: 1px solid #111; flex: none; }
.toolbar .grip { margin-bottom: 3px; }
.tool { width: 32px; height: 34px; padding: 2px 1px; flex: none; }
.tool svg { width: 30px; height: 30px; padding: 1px; }
.tool.on svg { background: #3e7bd0; outline: 1px solid #15305c; outline-offset: -1px; }
.sep { width: 7px; height: 17px; margin-top: 9px; display: flex; justify-content: center; flex: none; }
.sep::before { content: ""; width: 1px; background: #111; }
.tool-sel { width: 68px; height: 20px; margin-top: 2px; background: linear-gradient(#f1f1f1, #ccc); color: #000; border: solid #111; border-width: 2px 0 0 2px; }
.tool-sel.wide { width: 118px; background: #fff; border: 1px solid #eee; border-top: 2px solid #111; padding: 1px 14px 0 0; }
.wide select { background: #5a5a5a; }
.ribbon { display: flex; height: 41px; padding-top: 1px; }
.ribbon-body { flex: 1; margin-left: 3px; border-left: 1px solid #222; background: linear-gradient(#4b4b4b, #3c3c3c); }
.tabs { display: flex; height: 20px; padding: 1px 0 0 2px; background: #555; border-bottom: 1px solid #333; }
.tab { padding: 0 26px; color: #aaa; line-height: 18px; white-space: nowrap; }
.tab.active { width: 153px; padding: 0; color: #ddd; background: linear-gradient(#777, #585858); border: solid #2d2d2d; border-width: 1px 1px 0; line-height: 16px; }
.tab.mini { padding: 0 22px; }
.mini svg { width: 26px; height: 10px; }
.polys { height: 19px; padding: 1px; }
.polys button { height: 18px; padding: 0 3px; border: 1px solid #666; border-top: 0; color: #eee; }
.work { flex: 1; display: flex; min-height: 0; }
.left { flex: 1; min-width: 0; display: flex; flex-direction: column; }
.viewport { flex: 1; position: relative; border: 2px solid #71652c; background: #393939; min-height: 300px; overflow: hidden; }
.scene { position: absolute; inset: -2px; width: calc(100% + 4px); height: calc(100% + 4px); }
.vlabel { position: relative; display: flex; gap: 1px; padding: 3px; font: 11px/17px "DejaVu Sans Mono", "Noto Sans CJK SC", monospace; color: #d8d8d8; white-space: pre; }
.vlabel b { font-weight: 500; font-family: "Noto Sans CJK SC", sans-serif; }
.vlabel em { font-style: normal; font-size: 10px; color: #999; font-family: "Liberation Serif", "Noto Sans CJK SC", serif; }
.slider { display: flex; height: 19px; border-bottom: 1px solid #222; font-size: 11px; color: #ccc; }
.slider button { width: 15px; border-right: 1px solid #111; line-height: 17px; }
.slider .thumb { width: 126px; border: solid #0c0c0c; border-width: 0 2px 2px 1px; }
.timeline { display: flex; height: 28px; border-bottom: 1px solid #383838; }
.mini-curve { width: 48px; padding: 4px 12px; }
.mini-curve svg { width: 20px; height: 18px; }
.ruler { flex: 1; display: flex; padding-right: 51px; background: #2a2a2a; border-top: 1px solid #111; font-size: 11px; color: #b5b5b5; }
.frame { flex: 1 1 0; min-width: 0; display: flex; justify-content: center; background: linear-gradient(#777, #777) center top / 1px 12px no-repeat; }
.frame.five { background-size: 1px 26px; }
.frame span { flex: none; line-height: 14px; height: 13px; margin-top: 12px; }
.frame.now { background: #84801f; margin: 0 1px; color: #eeec70; }
.panel { width: 183px; flex: none; padding: 3px 5px 0; display: flex; flex-direction: column; }
.ptabs { display: flex; height: 25px; margin: 0 0 4px -2px; border-bottom: 1px solid #393939; }
.ptabs button { width: 29px; padding: 0 4px 0 0; border-right: 1px solid #161616; }
.ptabs svg { width: 24px; height: 24px; }
.name { display: flex; gap: 4px; height: 21px; margin: 0 3px 5px 2px; }
.name input { flex: 1; }
.name input, .modlist, .param input, .coord input, .time input { border: solid #161616; border-width: 2px 1px 1px 2px; background: #555; padding-left: 1px; color: #ddd; border-right-color: #3c3c3c; border-bottom-color: #666; }
.swatch { width: 17px; background: #c5f0e8; border: 1px solid #222; }
.modlist { height: 23px; margin: 0 2px 8px 3px; padding-left: 0; }
.modlist::before { content: ""; position: absolute; right: 0; top: 0; bottom: 0; width: 17px; background: #fff; pointer-events: none; }
.sets { display: grid; grid-template-columns: 1fr 1fr; gap: 2px; margin: 0 5px 7px 0; }
.sets button { height: 21px; border: solid #181818; border-width: 0 1px 1px 0; box-shadow: inset 1px 1px #555; overflow: hidden; white-space: nowrap; display: flex; justify-content: center; align-items: center; }
.sets button:disabled { color: #161616; }
.stack { height: 127px; border: 1px solid #ececec; outline: 1px solid #777; outline-offset: -2px; background: #555; margin: 0 5px 4px 3px; font-size: 11px; }
.item { display: flex; align-items: center; gap: 6px; height: 17px; padding-left: 7px; background: #444; border-bottom: 1px solid #777; }
.item button { width: 9px; height: 9px; background: #050505; color: #aaa; line-height: 8px; }
.stack-tools { display: flex; height: 24px; padding-left: 6px; margin-bottom: 9px; }
.stack-tools svg { width: 24px; height: 24px; }
.stack-tools .sep { width: 12px; margin-top: 4px; }
.rollouts { flex: 1; display: flex; border-top: 2px solid #111; padding-top: 8px; margin: 0 0 7px -2px; }
.roll-col { flex: 1; border: solid #161616; border-width: 1px 0 0 1px; padding: 4px 2px 0 3px; }
.bar { width: 4px; background: linear-gradient(#101010 0 109px, #c6c6c6 109px); margin-right: 1px; }
.roll { border: 1px solid #181818; border-top: 0; }
.roll-head { display: flex; width: calc(100% - 4px); height: 16px; margin: 0 2px; padding: 0 5px; border: 1px solid #737373; background: #444; }
.roll-head span:last-child { flex: 1; line-height: 14px; }
.roll-head span { line-height: 12px; }
.roll-body { padding: 0 8px 2px 6px; }
.check { display: flex; align-items: center; gap: 5px; height: 18px; white-space: nowrap; }
.indent { padding-left: 15px; }
.off { color: #161616; }
input[type=checkbox] { appearance: none; width: 12px; height: 12px; background: #444; border: solid #0d0d0d; border-width: 2px 1px 1px 2px; border-right-color: #666; border-bottom-color: #666; display: grid; place-items: center; }
input[type=checkbox]:checked::before { content: ""; width: 3px; height: 6px; border: solid #fff; border-width: 0 2px 2px 0; transform: rotate(42deg) translate(-1px, -1px); }
fieldset { margin: 3px 0 0 2px; padding: 0 0 6px; border: 1px solid #111; min-width: 0; }
legend { display: flex; align-items: center; height: 20px; padding: 0; margin-left: 6px; width: 128px; }
legend label, .radio { display: flex; align-items: center; gap: 6px; height: 20px; }
.radio { margin-left: 6px; }
.dash { height: 1px; width: 10px; margin-left: 18px; background: #111; }
input[type=radio] { appearance: none; width: 11px; height: 11px; border-radius: 6px; background: #555; border: 1px solid #111; border-bottom-color: #777; display: grid; place-items: center; }
input[type=radio]:checked { background: #222; }
input[type=radio]:checked::before { content: ""; width: 5px; height: 5px; border-radius: 3px; background: #f0f0f0; }
.param { display: flex; align-items: center; justify-content: flex-end; height: 20px; padding-right: 7px; gap: 2px; }
.param label { margin-right: 1px; white-space: nowrap; }
.param input { width: 57px; height: 16px; }
.param.off input { color: #1b1b1b; }
.param.ratio input { width: 41px; }
.param.last { height: 19px; }
.plock { width: 13px; height: 16px; }
.plock svg { width: 13px; height: 15px; }
.spin { display: flex; flex-direction: column; justify-content: center; gap: 4px; width: 13px; height: 16px; padding: 0 3px; border: solid #161616; border-width: 0 1px 1px 0; flex: none; }
.spin button { border: 3px solid transparent; border-top: 0; border-bottom: 4px solid #e5e5e5; height: 0; width: 0; }
.spin button:last-child { border-top: 4px solid #e5e5e5; border-bottom: 0; }
.roll.next { margin-top: 7px; border-bottom: 0; }
.steps { padding-right: 16px; height: 28px; }
.status { display: flex; height: 49px; padding-top: 1px; gap: 4px; }
.script { width: 99px; display: flex; flex-direction: column; padding-left: 2px; border-right: 1px solid #fff; }
.pink { height: 22px; background: #ddc0c4; border-top: 1px solid #111; border-bottom: 2px solid #fff; }
.script input { flex: 1; width: 100%; background: #fff; color: #000; padding-left: 4px; font: 12px "Liberation Mono", "Noto Sans CJK SC", monospace; }
.info { flex: 1; border-left: 1px solid #111; padding-left: 2px; display: flex; flex-direction: column; gap: 2px; }
.line { display: flex; align-items: center; height: 23px; }
.well { height: 22px; border: solid #161616; border-width: 1px 0 0 1px; padding: 2px 5px; line-height: 18px; white-space: nowrap; }
.grow { flex: 1; border-right: 1px solid #393939; min-width: 0; }
.grid { width: 100px; margin-left: 2px; border-right: 1px solid #161616; }
.sb { width: 25px; height: 23px; flex: none; display: grid; place-items: center; }
.sb svg { width: 24px; height: 23px; }
.coord { display: flex; align-items: center; width: 82px; }
.coord label { width: 13px; text-align: right; font-size: 11px; }
.coord input { flex: 1; height: 20px; }
.coord .spin { width: 12px; padding: 0 2px; }
.cube { width: 22px; height: 22px; border: 1px solid #111; background: #397bd0; }
.cube svg { width: 20px; height: 20px; }
.bigkey { width: 41px; border: 1px solid #161616; display: grid; place-items: center; }
.bigkey svg { width: 26px; height: 14px; }
.keys { width: 67px; display: flex; flex-direction: column; gap: 2px; white-space: nowrap; }
.keys button { height: 22px; border: solid #111; border-width: 0 1px 1px 0; padding-left: 2px; text-align: left; }
.filters { width: 113px; display: flex; flex-direction: column; gap: 2px; }
.filters select { appearance: none; height: 22px; border: 1px solid #111; background: #eee; color: #000; padding-left: 1px; }
.filters .sb { width: 21px; }
.fbtn { flex: 1; height: 22px; border: solid #111; border-width: 0 1px 1px 0; white-space: nowrap; }
.time { width: 104px; display: flex; flex-direction: column; gap: 2px; }
.time .line { padding-left: 2px; }
.time input { flex: 1; height: 20px; margin-left: 2px; }
.time .spin { width: 12px; padding: 0 2px; }
.nav { display: grid; grid-template-columns: 20px 20px 24px 23px 23px; width: 117px; }
.nav .sb { width: 100%; }
.taskbar { height: 4px; display: flex; gap: 5px; padding-left: 369px; background: linear-gradient(90deg, #2f7394, #387f9e 28%, #2771b6 60%, #174675 85%, #21527f); border-top: 1px solid #86c3d6; }
.taskbar i { width: 57px; background: #e4f0f6; border-radius: 3px 3px 0 0; }
.mark { position: absolute; right: 26px; top: 585px; width: 224px; height: 216px; pointer-events: none; }
.brand { position: absolute; right: 71px; bottom: 25px; width: 234px; height: 115px; display: flex; align-items: center; gap: 16px; padding: 0 0 2px 13px; background: #222f55; color: #d3d7e2; }
.brand svg { width: 48px; height: 50px; }
.brand strong { display: block; font-size: 36px; line-height: 36px; font-weight: 700; }
.brand span { display: block; font: 17px/20px "DejaVu Sans", sans-serif; }
</style>
